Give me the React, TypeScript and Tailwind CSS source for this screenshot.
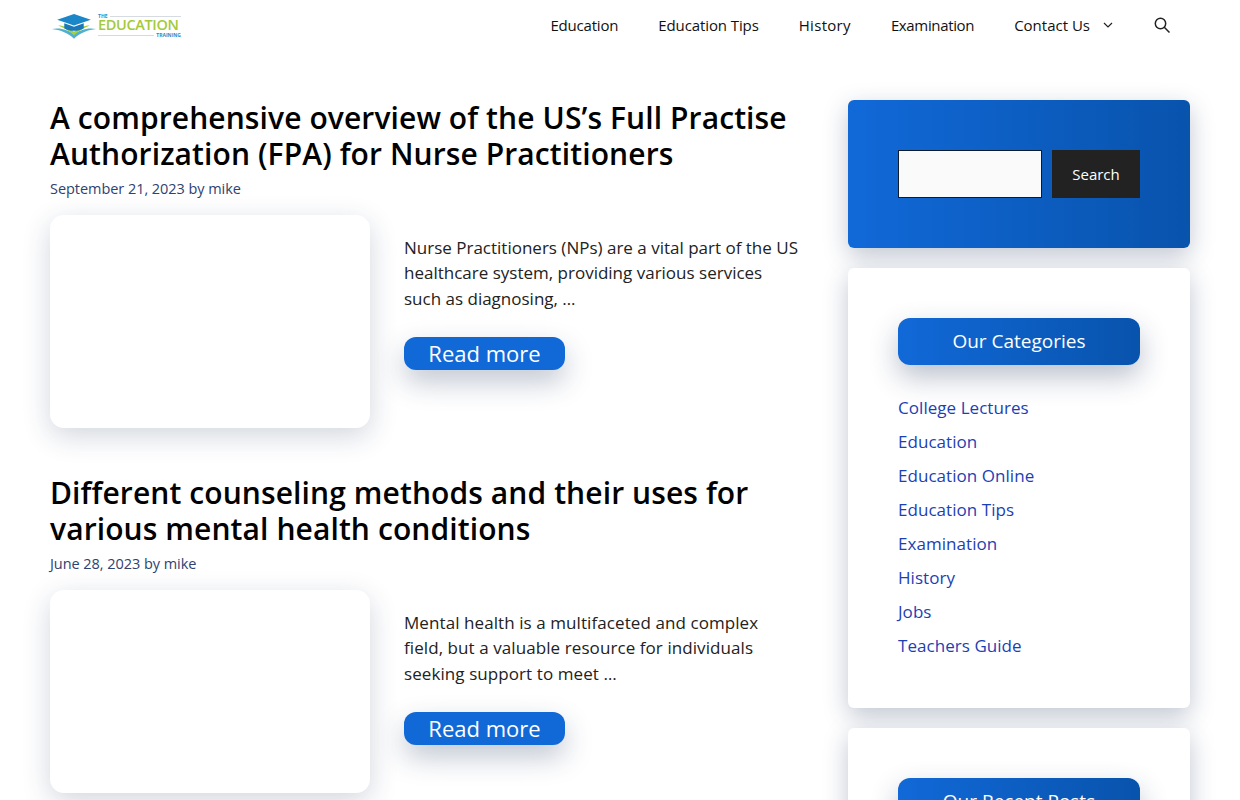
const navItems = [
  { name: "Education", className: "tracking-[-0.2px]" },
  { name: "Education Tips", className: "tracking-[-0.1px]" },
  { name: "History", className: "tracking-[0.3px]" },
  { name: "Examination", className: "tracking-[-0.35px]" },
];

const categories = [
  "College Lectures",
  "Education",
  "Education Online",
  "Education Tips",
  "Examination",
  "History",
  "Jobs",
  "Teachers Guide",
];

const gradient = "bg-[linear-gradient(90deg,#1169d8,#0853ac)]";

function Logo() {
  return (
    <div className="flex items-start">
      <svg width="46" height="27" viewBox="0 0 52 30" className="mt-[12px] ml-[1px]">
        <path d="M1 19 C10 17 20 20 26 25 C32 20 42 17 51 19 C42 20 33 23 26 30 C19 23 10 20 1 19Z" fill="#4fb0d0" />
        <path d="M8 15 C15 15 22 18 26 22 C30 18 37 15 44 15 C37 18 31 21 26 26 C21 21 15 18 8 15Z" fill="#a5cf3f" />
        <path d="M26 2 L45 8.5 L26 15 L7 8.5Z" fill="#1b87c9" />
        <path d="M15 12.5 L26 16.5 L37 12.5 L37 18 C31 22 21 22 15 18Z" fill="#1b78b8" />
      </svg>
      <div className="mt-[13px] ml-[1px] flex w-[83px] flex-col">
        <div className="flex h-[6px] items-center gap-[2px]">
          <span className="text-[5px] leading-[6px] font-bold text-[#2b8ac6]">THE</span>
          <div className="h-px flex-1 bg-[#d5dbe0]" />
        </div>
        <span className="text-[14.5px] leading-[12px] font-semibold tracking-[-0.35px] whitespace-nowrap text-[#a4c93c]">EDUCATION</span>
        <div className="mt-[1px] flex h-[6px] items-center gap-[2px]">
          <div className="h-px flex-1 bg-[#d5dbe0]" />
          <span className="text-[5px] leading-[6px] font-bold text-[#2b8ac6]">TRAINING</span>
        </div>
      </div>
    </div>
  );
}

function Header() {
  return (
    <header className="flex h-[50px] justify-between pr-[70px] pl-[50px]">
      <Logo />
      <nav className="flex items-center text-[15px] text-[#111]">
        {navItems.map((item) => (
          <a key={item.name} className={`px-[20px] ${item.className}`}>
            {item.name}
          </a>
        ))}
        <a className="flex items-center px-[20px]">
          Contact Us
          <svg width="12" height="12" viewBox="0 0 12 12" fill="none" stroke="#222" strokeWidth="1.2" className="ml-[12px]">
            <path d="M2 4 L6 8 L10 4" />
          </svg>
        </a>
        <svg width="16" height="16" viewBox="0 0 16 16" fill="none" stroke="#222" strokeWidth="1.5" className="ml-[20px]">
          <circle cx="6.5" cy="6.5" r="5.2" />
          <path d="M10.3 10.3 L15.5 15.5" />
        </svg>
      </nav>
    </header>
  );
}

type PostProps = {
  lines: string[];
  date: string;
  excerpt: string[];
  excerptClass?: string;
  imageHeight: string;
};

function Post({ lines, date, excerpt, excerptClass = "", imageHeight }: PostProps) {
  return (
    <article className="mb-[47px]">
      <h2 className="text-[30px] leading-[36px] font-semibold tracking-[0.1px] text-black">
        {lines.map((line) => (
          <span key={line} className="block whitespace-nowrap">
            {line}
          </span>
        ))}
      </h2>
      <p className="mt-[6px] text-[14.5px] leading-[22px] tracking-[-0.05px] text-[#2f4270]">
        {date} by mike
      </p>
      <div className="mt-[15px] flex">
        <div className={`w-[320px] shrink-0 rounded-[14px] bg-white shadow-[0_8px_28px_rgba(30,50,90,0.2)] ${imageHeight}`} />
        <div className="ml-[34px] pt-[19.6px]">
          <p className={`text-[17px] leading-[25.5px] text-[#222] ${excerptClass}`}>
            {excerpt.map((line) => (
              <span key={line} className="block whitespace-nowrap">
                {line}
              </span>
            ))}
          </p>
          <a className="mt-[26px] flex h-[33px] w-[161px] items-center justify-center rounded-[12px] bg-[#1169d8] text-[22px] text-white shadow-[0_12px_28px_rgba(30,50,90,0.28)]">
            Read more
          </a>
        </div>
      </div>
    </article>
  );
}

function Sidebar() {
  const card = "rounded-[6px] p-[50px] shadow-[0_8px_24px_rgba(30,50,90,0.28)]";
  return (
    <aside className="flex w-[342px] shrink-0 flex-col gap-[20px]">
      <div className={`${card} ${gradient} h-[148px]`}>
        <div className="flex gap-[10px]">
          <input className="h-[48px] w-[144px] border border-[#0d1b2e] bg-[#fafafa]" />
          <button className="h-[48px] w-[88px] bg-[#222] text-[15px] text-white">Search</button>
        </div>
      </div>
      <div className={`${card} h-[440px] bg-white`}>
        <h3 className={`${gradient} flex h-[47px] items-center justify-center rounded-[12px] text-[19px] text-white shadow-[0_12px_28px_rgba(30,50,90,0.3)]`}>
          Our Categories
        </h3>
        <ul className="mt-[26px]">
          {categories.map((item) => (
            <li key={item} className="h-[34px] text-[17px] leading-[34px] tracking-[0.05px] text-[#1b3fb5]">
              {item}
            </li>
          ))}
        </ul>
      </div>
      <div className={`${card} h-[300px] bg-white`}>
        <h3 className={`${gradient} flex h-[47px] items-center justify-center rounded-[12px] text-[19px] text-white shadow-[0_12px_28px_rgba(30,50,90,0.3)]`}>
          Our Recent Posts
        </h3>
      </div>
    </aside>
  );
}

export default function App() {
  return (
    <div className="h-[800px] overflow-hidden bg-white font-['Open_Sans',sans-serif]">
      <Header />
      <main className="flex justify-between pt-[50px] pr-[50px] pl-[50px]">
        <div className="w-[750px]">
          <Post
            lines={[
              "A comprehensive overview of the US’s Full Practise",
              "Authorization (FPA) for Nurse Practitioners",
            ]}
            date="September 21, 2023"
            excerpt={[
              "Nurse Practitioners (NPs) are a vital part of the US",
              "healthcare system, providing various services",
              "such as diagnosing, …",
            ]}
            imageHeight="h-[213px]"
          />
          <Post
            lines={[
              "Different counseling methods and their uses for",
              "various mental health conditions",
            ]}
            date="June 28, 2023"
            excerpt={[
              "Mental health is a multifaceted and complex",
              "field, but a valuable resource for individuals",
              "seeking support to meet …",
            ]}
            excerptClass="tracking-[0.08px]"
            imageHeight="h-[203px]"
          />
        </div>
        <Sidebar />
      </main>
    </div>
  );
}
